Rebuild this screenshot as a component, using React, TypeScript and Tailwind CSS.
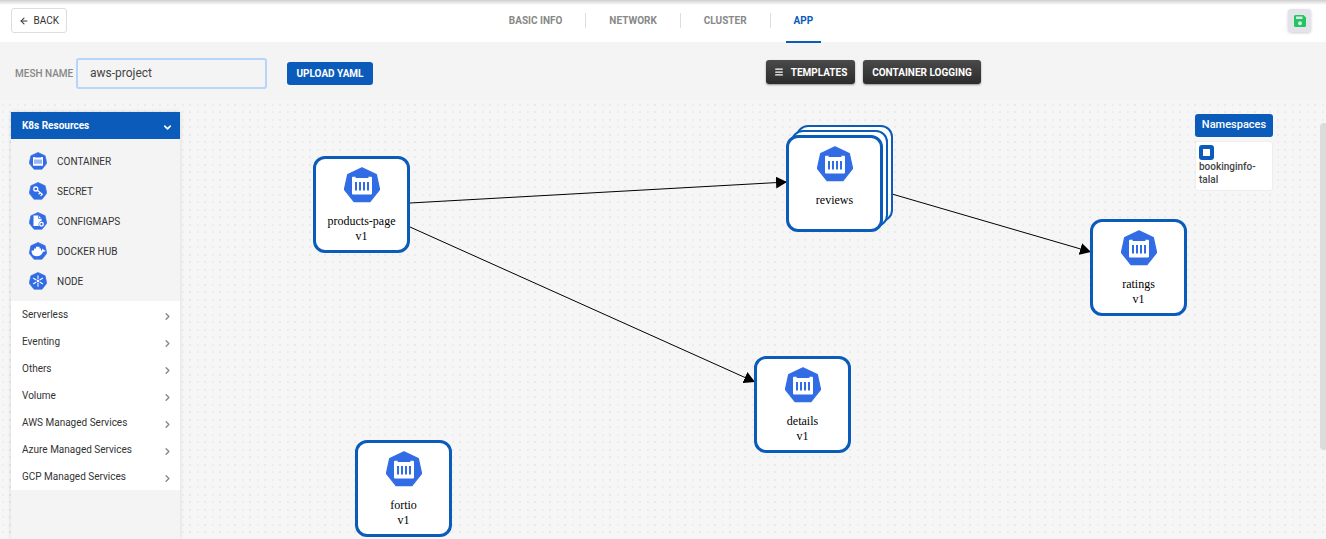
import type { ReactNode } from "react";
import { ArrowLeft, ChevronDown, ChevronRight, Menu } from "lucide-react";

const HEPTAGON = "M18 .8 32.3 7.5 35.6 22.6 26 34.6H10L.4 22.6 3.7 7.5Z";

function Hept({ className, children }: { className: string; children: ReactNode }) {
  return (
    <svg viewBox="0 0 36 36" className={className} aria-hidden="true">
      <path d={HEPTAGON} fill="#326ce5" stroke="#326ce5" strokeWidth="1.2" strokeLinejoin="round" />
      {children}
    </svg>
  );
}

const containerGlyph = (
  <>
    <path fill="#fff" d="M9 9.800h2.600v1.200h12.800V9.800H27a1 1 0 0 1 1 1V26.500a1 1 0 0 1-1 1H9a1 1 0 0 1-1-1V10.800a1 1 0 0 1 1-1Z" />
    <path fill="#326ce5" d="M11 15h2v8.500h-2zM15 15h2v8.500h-2zM19 15h2v8.500h-2zM23 15h2v8.500h-2z" />
  </>
);

const secretGlyph = (
  <g fill="none" stroke="#fff" strokeWidth="2.6" strokeLinecap="round">
    <circle cx="13.5" cy="14" r="4" />
    <path d="M17 17l9.500 7.500M22 21l-2 2.600M26 24.500l-2 2.600" />
  </g>
);

const configGlyph = (
  <>
    <path fill="#fff" d="M9 7h10l6 6v5a6.500 6.500 0 0 0-5 10H9z" />
    <path fill="#326ce5" d="M18.500 7v6.500H25V12h-5V7z" />
    <circle cx="25" cy="24.500" r="3.600" fill="none" stroke="#fff" strokeWidth="2.600" />
  </>
);

const dockerGlyph = (
  <path
    fill="#fff"
    d="M5 17h5v-4h4V9.500h7V13h3v4h2c0-2 .5-3 1.500-4 1.500 1 2 2.500 2 3.500 1.500-.3 3 0 3.500.5-1 2-2.500 2.700-5 2.700C26 25.500 21.500 28.500 15.500 28.500 9 28.500 5 24.500 5 17Z"
  />
);

const nodeGlyph = (
  <g stroke="#fff" strokeWidth="2.200" strokeLinecap="round" fill="none">
    <path d="M18 7.500v6M18 22.500v6M8.900 12.700l5 2.900M22.100 20.400l5 2.900M27.100 12.700l-5 2.900M13.900 20.400l-5 2.900" />
    <circle cx="18" cy="18" r="1.600" fill="#fff" />
  </g>
);

const resources = [
  { name: "CONTAINER", glyph: containerGlyph },
  { name: "SECRET", glyph: secretGlyph },
  { name: "CONFIGMAPS", glyph: configGlyph },
  { name: "DOCKER HUB", glyph: dockerGlyph },
  { name: "NODE", glyph: nodeGlyph },
];

const groups = [
  "Serverless",
  "Eventing",
  "Others",
  "Volume",
  "AWS Managed Services",
  "Azure Managed Services",
  "GCP Managed Services",
];

const tabs = ["BASIC INFO", "NETWORK", "CLUSTER", "APP"];

const nodes = [
  { name: "products-page", version: "v1", x: 313, y: 56 },
  { name: "reviews", version: "", x: 786, y: 35 },
  { name: "ratings", version: "v1", x: 1090, y: 119 },
  { name: "details", version: "v1", x: 754, y: 256 },
  { name: "fortio", version: "v1", x: 355, y: 340 },
];

const edges = [
  "M410 103L787 82",
  "M410 127L755 282",
  "M892 94L1091 152",
];

function ServiceNode({ name, version, x, y }: (typeof nodes)[number]) {
  return (
    <div className="absolute size-[97px]" style={{ left: x, top: y }}>
      {!version && (
        <>
          <div className="absolute -top-2.5 left-2.5 size-full rounded-xl border-2 border-[#0b5cba] bg-white" />
          <div className="absolute -top-[5px] left-[5px] size-full rounded-xl border-2 border-[#0b5cba] bg-white" />
        </>
      )}
      <div className="relative flex size-full flex-col items-center rounded-xl border-[3px] border-[#0b5cba] bg-white pt-2 text-center font-['Liberation_Serif',serif] text-[12px] leading-[15px] text-black">
        <Hept className="size-9">{containerGlyph}</Hept>
        <p className="mt-[11px]">{name}</p>
        {version && <p>{version}</p>}
      </div>
    </div>
  );
}

export default function App() {
  return (
    <div className="flex h-screen flex-col overflow-hidden bg-[#f4f4f4] font-['Roboto',sans-serif] text-[10px] text-[#444]">
      <header className="grid h-[42px] shrink-0 grid-cols-[1fr_auto_1fr] items-center bg-white bg-[linear-gradient(#cfcfcf,#ffffff_5px)] pr-[15px] pl-[11px]">
        <button className="mb-0.5 flex h-[25px] w-14 items-center justify-between rounded-[3px] border border-[#ddd] bg-white px-[7px] text-[#333]">
          <ArrowLeft size={10} strokeWidth={2.5} />
          BACK
        </button>
        <nav className="flex h-[43px] items-stretch font-bold text-[#888]">
          {tabs.map((tab, i) => (
            <div key={tab} className="flex items-center">
              {i > 0 && <span className="mx-[15px] mb-0.5 h-[15px] w-px bg-[#ddd]" />}
              <a
                href="#"
                className={
                  tab === "APP"
                    ? "flex h-full items-center border-b-2 border-[#0b5cba] px-2 text-[#0b5cba]"
                    : "flex h-full items-center border-b-2 border-transparent px-2"
                }
              >
                {tab}
              </a>
            </div>
          ))}
        </nav>
        <button aria-label="Save" className="mb-0.5 grid size-[23px] place-items-center justify-self-end rounded-[3px] bg-[#e4e3ea] shadow-[0_1px_3px_#0003]">
          <svg viewBox="0 0 12 12" className="size-3" aria-hidden="true">
            <path fill="#1fc760" fillRule="evenodd" d="M1.500 0H9.500L12 2.500V10.500Q12 12 10.500 12H1.500Q0 12 0 10.500V1.500Q0 0 1.500 0ZM2 1.500V4H8.500V1.500ZM6 6.200A2 2 0 1 0 6 10.200 2 2 0 1 0 6 6.200Z" />
          </svg>
        </button>
      </header>

      <div className="flex h-[58px] shrink-0 items-center px-[15px] pt-1">
        <div className="flex flex-1 items-center">
          <label htmlFor="mesh" className="w-[57px] font-medium whitespace-nowrap text-[#888]">
            MESH NAME
          </label>
          <input
            id="mesh"
            defaultValue="aws-project"
            autoFocus
            className="ml-1 h-[31px] w-[191px] rounded-[3px] border-2 border-[#b5d5fb] bg-[#f4f4f4] px-3 text-[12px] text-[#444] outline-none"
          />
          <button className="ml-5 h-[23px] w-[86px] rounded-[3px] bg-[#0b5cba] font-bold text-white">UPLOAD YAML</button>
        </div>
        <div className="mr-[330px] flex gap-2 pb-0.5 text-white">
          <button className="flex h-6 w-[89px] items-center justify-center gap-[7px] rounded-[3px] bg-linear-to-b from-[#4a4a4a] to-[#2c2c2c] font-bold shadow-[0_1px_2px_#0006]">
            <Menu size={10} strokeWidth={3} />
            TEMPLATES
          </button>
          <button className="h-6 w-[118px] rounded-[3px] bg-linear-to-b from-[#4a4a4a] to-[#2c2c2c] font-bold shadow-[0_1px_2px_#0006]">
            CONTAINER LOGGING
          </button>
        </div>
      </div>

      <main className="relative flex min-h-0 flex-1 justify-between overflow-hidden bg-[#f6f6f6] bg-[radial-gradient(circle_at_10px_5px,#cccccc,transparent_1px),radial-gradient(circle_at_10px_12px,#cccccc,transparent_1px),radial-gradient(circle_at_3px_5px,#d8d8d8,transparent_1px),radial-gradient(circle_at_3px_12px,#d8d8d8,transparent_1px)] bg-[size:15px_15px] pt-3 pl-[11px]">
        <svg className="absolute inset-0 size-full" aria-hidden="true">
          <defs>
            <marker id="arrow" viewBox="0 0 11 12" refX="11" refY="6" markerWidth="11" markerHeight="12" markerUnits="userSpaceOnUse" orient="auto">
              <path d="M0 0L11 6L0 12Z" />
            </marker>
          </defs>
          {edges.map((d) => (
            <path key={d} d={d} stroke="#000" markerEnd="url(#arrow)" />
          ))}
        </svg>
        {nodes.map((n) => (
          <ServiceNode key={n.name} {...n} />
        ))}

        <aside className="relative w-[169px] bg-[#f4f4f4] shadow-[0_0_4px_#0002]">
          <button className="flex h-[27px] w-full items-center justify-between bg-[#0b5cba] pr-[7px] pl-[11px] font-bold text-white">
            K8s Resources
            <ChevronDown size={11} strokeWidth={3.5} className="mt-1" />
          </button>
          <ul className="pt-[7px] pb-[5px]">
            {resources.map((r) => (
              <li key={r.name} className="flex h-[30px] items-center gap-2.5 pl-[18px] text-[#333]">
                <Hept className="size-[18px]">{r.glyph}</Hept>
                {r.name}
              </li>
            ))}
          </ul>
          <ul className="bg-white">
            {groups.map((g) => (
              <li key={g}>
                <button className="flex h-[27px] w-full items-center justify-between pr-[7px] pl-[11px] text-[#333]">
                  {g}
                  <ChevronRight size={11} strokeWidth={3} className="mt-1 text-[#888]" />
                </button>
              </li>
            ))}
          </ul>
        </aside>

        <section className="relative mt-0.5 mr-[53px] w-[78px]">
          <h2 className="grid h-[23px] place-items-center rounded-[3px] bg-[#0b5cba] text-[11px] font-medium text-white">Namespaces</h2>
          <label className="mt-1 block rounded-[3px] border border-[#eee] bg-white px-[3px] pt-[3px] pb-1 leading-[13px] font-medium text-[#444]">
            <input
              type="checkbox"
              defaultChecked
              className="block size-[15px] appearance-none rounded-[3px] border-4 border-[#0b5cba] bg-white"
            />
            bookinginfo-
            <br />
            talal
          </label>
        </section>
        <div className="absolute top-[23px] right-0 h-[327px] w-1.5 rounded-l bg-[#dcdcdc]" />
      </main>
    </div>
  );
}
